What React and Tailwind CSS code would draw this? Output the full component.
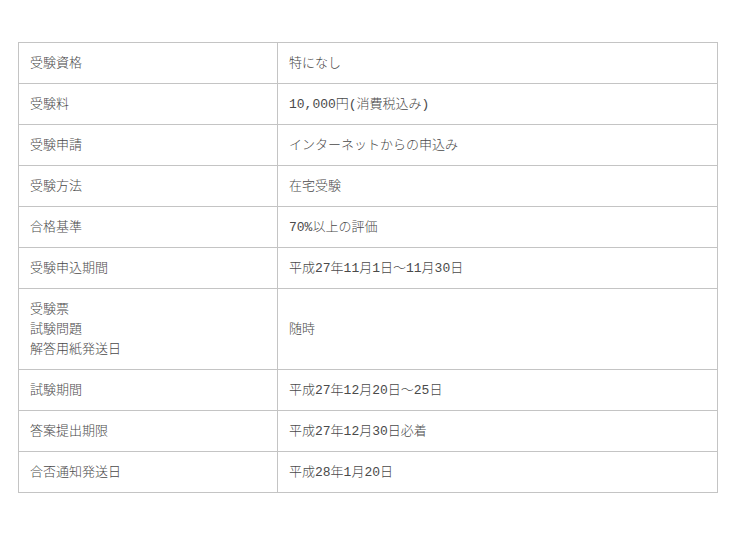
import React from 'react';

const rows = [
  { label: ['受験資格'], value: '特になし' },
  { label: ['受験料'], value: '10,000円(消費税込み)' },
  { label: ['受験申請'], value: 'インターネットからの申込み' },
  { label: ['受験方法'], value: '在宅受験' },
  { label: ['合格基準'], value: '70%以上の評価' },
  { label: ['受験申込期間'], value: '平成27年11月1日～11月30日' },
  { label: ['受験票', '試験問題', '解答用紙発送日'], value: '随時' },
  { label: ['試験期間'], value: '平成27年12月20日～25日' },
  { label: ['答案提出期限'], value: '平成27年12月30日必着' },
  { label: ['合否通知発送日'], value: '平成28年1月20日' },
];

export default function App() {
  return (
    <div className="w-[740px] h-[533px] bg-white pt-[42px] pl-[18px]" style={{ fontFamily: '"Liberation Mono", "Noto Sans CJK JP", monospace' }}>
      <table className="w-[700px] border-collapse text-[13px] leading-[20px] text-[#4a4a4a] font-light">
        <tbody>
          {rows.map((r, i) => (
            <tr key={i}>
              <td className="w-[259px] border border-[#c4c4c4] px-[11px] pt-[11px] pb-[9px] align-middle">
                {r.label.map((l, j) => (
                  <div key={j}>{l}</div>
                ))}
              </td>
              <td className="border border-[#c4c4c4] px-[11px] pt-[11px] pb-[9px] align-middle">{r.value}</td>
            </tr>
          ))}
        </tbody>
      </table>
    </div>
  );
}
